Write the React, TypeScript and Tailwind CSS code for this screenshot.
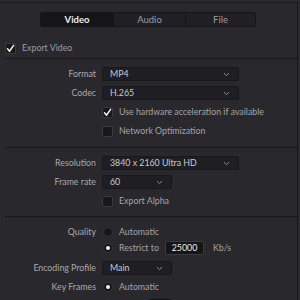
import React from 'react'

function Chevron() {
  return (
    <svg width="7" height="5" viewBox="0 0 7 5" className="shrink-0">
      <path d="M1 1.2 L3.5 3.6 L6 1.2" fill="none" stroke="#8d8d92" strokeWidth="1" />
    </svg>
  )
}

function Select({ value, wide = true }: { value: string; wide?: boolean }) {
  return (
    <div
      className={`flex h-[14px] items-center justify-between rounded-[2px] border border-[#18181b] bg-[#1f1f23] pl-[7px] pr-[8px] text-[#c9c9cd] ${
        wide ? 'w-[137px]' : 'w-[70px]'
      }`}
    >
      <span>{value}</span>
      <Chevron />
    </div>
  )
}

function Check({ on = false }: { on?: boolean }) {
  return (
    <div className="flex h-[11px] w-[11px] shrink-0 items-center justify-center rounded-[2px] border border-[#3a3a3f] bg-[#18181b]">
      {on && (
        <svg width="9" height="9" viewBox="0 0 9 9">
          <path d="M1.5 4.8 L3.5 7.2 L7.6 1.4" fill="none" stroke="#f2f2f2" strokeWidth="1.5" strokeLinecap="round" strokeLinejoin="round" />
        </svg>
      )}
    </div>
  )
}

function Radio({ on = false }: { on?: boolean }) {
  return (
    <div className="flex h-[10px] w-[10px] shrink-0 items-center justify-center rounded-full border border-[#36363a] bg-[#18181b]">
      {on && <div className="h-[4px] w-[4px] rounded-full bg-[#f4f4f4]" />}
    </div>
  )
}

function Row({ label = '', children }: { label?: string; children: React.ReactNode }) {
  return (
    <div className="flex h-[14px] items-center">
      <div className="w-[96px] shrink-0 text-right text-[#a8a8ad]">{label}</div>
      <div className="ml-[6px] flex items-center">{children}</div>
    </div>
  )
}

function Divider() {
  return <div className="ml-[5px] h-px bg-[#18181b]" />
}

export default function App() {
  return (
    <div
      className="h-[300px] w-[300px] overflow-hidden bg-[#28282d] pt-[2px] text-[8.8px] leading-none text-[#a4a4a9]"
      style={{ fontFamily: 'Lato, "Liberation Sans", sans-serif' }}
    >
      <div className="h-[310px] w-[298px] border-t border-r border-[#19191c]">
        <div className="pt-[9px] pl-[40px]">
          <div className="flex h-[15px] w-[216px] rounded-[2px] border border-[#161618] bg-[#202024] text-[9.5px]">
            <div className="flex w-[72px] items-center justify-center bg-[#151517] font-bold text-[#ececec]">Video</div>
            <div className="flex w-[72px] items-center justify-center border-l border-[#161618] text-[#9d9da2]">Audio</div>
            <div className="flex flex-1 items-center justify-center border-l border-[#161618] text-[#9d9da2]">File</div>
          </div>
        </div>

        <div className="mt-[14px] flex h-[14px] items-center pl-[5px]">
          <Check on />
          <span className="ml-[6px] text-[#9c9ca1]">Export Video</span>
        </div>

        <div className="mt-[3px]">
          <Divider />
        </div>

        <div className="flex flex-col gap-[5px] pt-[8px] pb-[9px]">
          <Row label="Format">
            <Select value="MP4" />
          </Row>
          <Row label="Codec">
            <Select value="H.265" />
          </Row>
          <Row>
            <Check on />
            <span className="ml-[6px]">Use hardware acceleration if available</span>
          </Row>
          <Row>
            <Check />
            <span className="ml-[6px]">Network Optimization</span>
          </Row>
        </div>

        <Divider />

        <div className="flex flex-col gap-[5px] pt-[8px] pb-[8px]">
          <Row label="Resolution">
            <Select value="3840 x 2160 Ultra HD" />
          </Row>
          <Row label="Frame rate">
            <Select value="60" wide={false} />
          </Row>
          <Row>
            <Check />
            <span className="ml-[6px]">Export Alpha</span>
          </Row>
        </div>

        <Divider />

        <div className="flex flex-col pt-[8px]">
          <Row label="Quality">
            <div className="ml-[1px] flex items-center">
              <Radio />
              <span className="ml-[6px]">Automatic</span>
            </div>
          </Row>
          <div className="mt-[2px]">
            <Row>
              <div className="ml-[1px] flex items-center">
                <Radio on />
                <span className="ml-[6px] w-[46px]">Restrict to</span>
                <div className="flex h-[14px] w-[39px] items-center justify-center rounded-[2px] border border-[#3b3b40] bg-[#151517] text-[#ededed]">
                  25000
                </div>
                <span className="ml-[9px]">Kb/s</span>
              </div>
            </Row>
          </div>
          <div className="mt-[6px]">
            <Row label="Encoding Profile">
              <Select value="Main" wide={false} />
            </Row>
          </div>
          <div className="mt-[5px]">
            <Row label="Key Frames">
              <div className="ml-[1px] flex items-center">
                <Radio on />
                <span className="ml-[6px]">Automatic</span>
              </div>
            </Row>
          </div>
          <div className="mt-[3px]">
            <Row>
              <div className="ml-[1px] flex items-center text-[#6c6c71]">
                <Radio />
                <span className="ml-[6px] w-[29px]">Every</span>
                <div className="flex h-[14px] w-[24px] items-center justify-center rounded-[2px] border border-[#303034] bg-[#1c1c1f] text-[#6c6c71]">
                  30
                </div>
                <span className="ml-[8px]">frames</span>
              </div>
            </Row>
          </div>
        </div>
      </div>
    </div>
  )
}
